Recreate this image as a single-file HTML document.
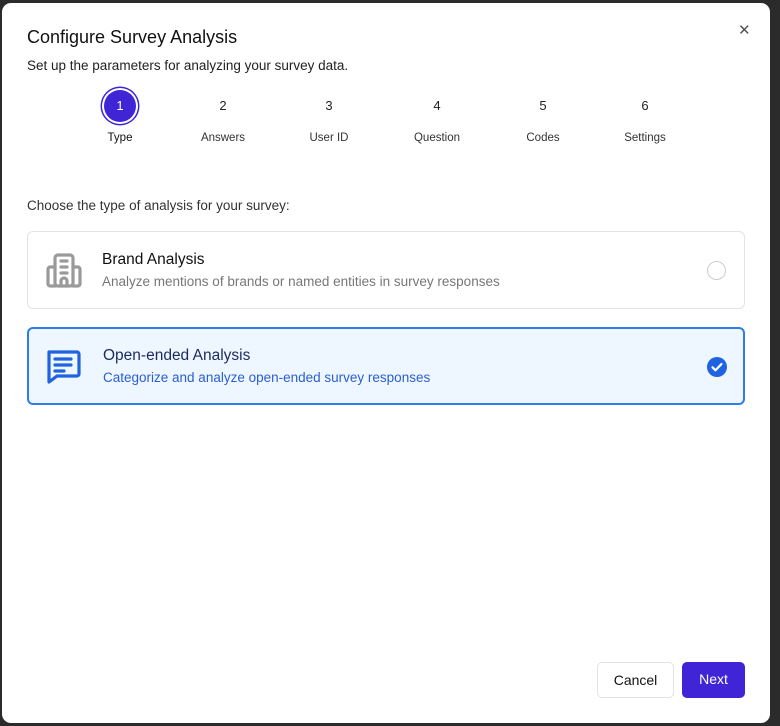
<!DOCTYPE html>
<html><head><meta charset="utf-8"><style>
*{box-sizing:border-box;margin:0;padding:0}
body{width:780px;height:726px;background:#2b2b2b;font-family:"Liberation Sans",sans-serif;position:relative;overflow:hidden}
.m{position:absolute;left:2px;top:3px;width:768px;height:720px;background:#fff;border-radius:9px}
.t{position:absolute;left:25px;top:24px;font-size:18px;color:#111;font-weight:500}
.s{position:absolute;left:25px;top:55px;font-size:13.5px;color:#222}
.x{position:absolute;left:736px;top:18px;font-size:15px;color:#555}
.st{position:absolute;top:87px;width:80px;margin-left:-40px;text-align:center;font-size:13px;color:#222}
.st .n{height:32px;line-height:32px;font-size:13px}
.st .l{margin-top:10px;font-size:11.5px;color:#333}
.c1 .n{width:32px;margin:0 auto;border-radius:50%;background:#3f25d6;color:#fff;box-shadow:0 0 0 2px #fff,0 0 0 3.5px #3f25d6}
.c1 .l{color:#111}
.q{position:absolute;left:25px;top:195px;font-size:13.5px;color:#333}
.card{position:absolute;left:25px;width:718px;height:78px;border:1.5px solid #e3e3e3;border-radius:6px;background:#fff}
.card .h{position:absolute;left:74px;top:19px;font-size:15.5px;color:#111}
.card .d{position:absolute;left:74px;top:42px;font-size:13.5px;color:#777}
.card svg{position:absolute}
.sel{border:2px solid #2f7de8;background:#eef6ff}
.sel .h{color:#1b2a5e}.sel .d{color:#2a5fd0}
.b{position:absolute;top:659px;height:36px;border-radius:5px;font-size:14px;line-height:34px;text-align:center}
</style></head><body>
<div class="m">
<div class="t">Configure Survey Analysis</div>
<div class="s">Set up the parameters for analyzing your survey data.</div>
<div class="x">✕</div>
<div class="st c1" style="left:118px"><div class="n">1</div><div class="l">Type</div></div>
<div class="st" style="left:221px"><div class="n">2</div><div class="l">Answers</div></div>
<div class="st" style="left:327px"><div class="n">3</div><div class="l">User ID</div></div>
<div class="st" style="left:435px"><div class="n">4</div><div class="l">Question</div></div>
<div class="st" style="left:541px"><div class="n">5</div><div class="l">Codes</div></div>
<div class="st" style="left:643px"><div class="n">6</div><div class="l">Settings</div></div>
<div class="q">Choose the type of analysis for your survey:</div>
<div class="card" style="top:228px">
<svg style="left:16px;top:18px" width="40" height="40" viewBox="0 0 40 40" fill="none" stroke="#9a9a9a" stroke-width="3.2" stroke-linecap="round" stroke-linejoin="round"><rect x="11" y="5" width="18" height="31" rx="3"/><path d="M11 17H6a2 2 0 0 0-2 2v15a2 2 0 0 0 2 2h5M29 17h5a2 2 0 0 1 2 2v15a2 2 0 0 1-2 2h-5M17 11h6M17 17h6M17 23h6M17 36v-5a3 3 0 0 1 6 0v5"/></svg>
<div class="h">Brand Analysis</div>
<div class="d">Analyze mentions of brands or named entities in survey responses</div>
<div style="position:absolute;left:679px;top:29px;width:19px;height:19px;border:1.5px solid #ccc;border-radius:50%"></div>
</div>
<div class="card sel" style="top:324px">
<svg style="left:15px;top:17px" width="40" height="40" viewBox="0 0 40 40" fill="none" stroke="#1f63e0" stroke-width="3.2" stroke-linecap="round" stroke-linejoin="round"><path d="M5 6h28a2 2 0 0 1 2 2v20a2 2 0 0 1-2 2H13l-8 6z"/><path d="M11 13h16M11 19h16M11 25h9"/></svg>
<div class="h" style="top:18px">Open-ended Analysis</div>
<div class="d" style="top:41px">Categorize and analyze open-ended survey responses</div>
<svg style="left:678px;top:28px" width="20" height="20" viewBox="0 0 20 20"><circle cx="10" cy="10" r="10" fill="#1f63e0"/><path d="M5.5 10.3l3 3 6-6.3" stroke="#fff" stroke-width="2.2" fill="none" stroke-linecap="round" stroke-linejoin="round"/></svg>
</div>
<div class="b" style="left:595px;width:77px;border:1px solid #e3e3e3;color:#111">Cancel</div>
<div class="b" style="left:680px;width:63px;background:#3f25d6;color:#fff">Next</div>
</div>
</body></html>
